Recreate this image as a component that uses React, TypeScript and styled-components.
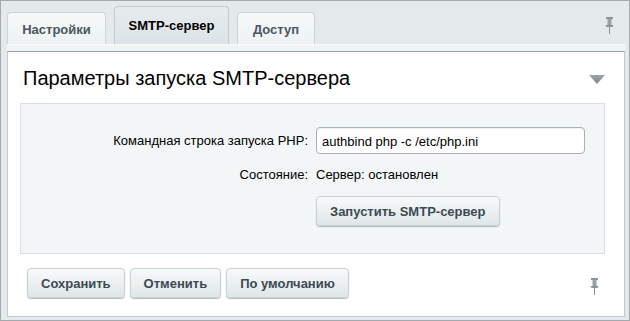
import React from "react";
import styled, { createGlobalStyle } from "styled-components";

const Global = createGlobalStyle`
  html, body { margin: 0; padding: 0; background: #fff; }
  body { font-family: "Liberation Sans", Arial, sans-serif; }
  * { box-sizing: border-box; }
`;

const Frame = styled.div`
  width: 630px;
  height: 321px;
  border: 1px solid #a3a9ac;
  background: #e4eaec;
  padding: 0 4px 3px 5px;
  display: flex;
  flex-direction: column;
`;

const TabBar = styled.div`
  height: 43px;
  display: flex;
  align-items: flex-end;
  gap: 8px;
  padding-left: 1px;
`;

const Tab = styled.div<{ $active?: boolean; $w: number }>`
  width: ${(p) => p.$w}px;
  height: ${(p) => (p.$active ? 38 : 32)}px;
  display: flex;
  align-items: center;
  justify-content: center;
  padding-top: ${(p) => (p.$active ? 0 : 1)}px;
  border: 1px solid ${(p) => (p.$active ? "#c3cbce" : "#cdd4d7")};
  border-bottom: none;
  border-radius: 4px 4px 0 0;
  background: ${(p) =>
    p.$active
      ? "linear-gradient(#e6ecee, #dce3e6)"
      : "linear-gradient(#f7f9f9, #eef2f3)"};
  font-weight: bold;
  font-size: 13px;
  color: ${(p) => (p.$active ? "#000" : "#4a5661")};
`;

const PinSlot = styled.div`
  margin-left: auto;
  align-self: flex-start;
  margin-top: 16px;
  margin-right: 11px;
  display: flex;
`;

const Strip = styled.div`
  height: 7px;
  background: #f1f4f5;
  border-top: 1px solid #f8fafa;
  margin-left: 1px;
`;

const Panel = styled.div`
  flex: 1;
  background: #fff;
  border: 1px solid #c4cbce;
  border-top: 1px solid #9aa2a5;
  margin-left: 1px;
  display: flex;
  flex-direction: column;
  padding: 14px 19px 0 15px;
`;

const TitleRow = styled.div`
  display: flex;
  align-items: center;
  justify-content: space-between;
  height: 24px;
`;

const Title = styled.h1`
  margin: 0;
  font-weight: normal;
  font-size: 20px;
  line-height: 24px;
  color: #000;
`;

const Box = styled.div`
  margin: 13px 0 0 -3px;
  background: #f3f6f7;
  border: 1px solid #d6e0e4;
  padding: 23px 0 27px 0;
  display: grid;
  grid-template-columns: 287px 1fr;
  column-gap: 8px;
  row-gap: 13px;
  align-items: center;
`;

const Label = styled.div`
  text-align: right;
  font-size: 13px;
  line-height: 16px;
  color: #000;
`;

const Value = styled.div`
  font-size: 13px;
  line-height: 16px;
  color: #000;
`;

const Input = styled.input`
  width: 269px;
  height: 27px;
  border: 1px solid #a8b1b5;
  border-radius: 4px;
  padding: 2px 5px 0;
  font-family: "Liberation Sans", Arial, sans-serif;
  font-size: 13px;
  color: #000;
  background: #fff;
  box-shadow: inset 0 1px 1px rgba(0, 0, 0, 0.06);
  outline: none;
`;

const Button = styled.button`
  height: 30px;
  padding: 0 13px;
  border: 1px solid #c8d0d3;
  border-radius: 4px;
  background: linear-gradient(#f8fafa, #dfe6e8);
  box-shadow: 0 1px 1px rgba(0, 0, 0, 0.28);
  font-family: "Liberation Sans", Arial, sans-serif;
  font-weight: bold;
  font-size: 13px;
  color: #3d4a54;
  cursor: pointer;
  justify-self: start;
`;

const Footer = styled.div`
  margin-top: 14px;
  padding-left: 4px;
  display: flex;
  align-items: center;
  gap: 5px;
`;

const FooterPin = styled.div`
  margin-left: auto;
  margin-right: 6px;
  margin-top: 6px;
  display: flex;
`;

const ArrowSlot = styled.div`
  display: flex;
  margin-top: 2px;
`;

const Pin = () => (
  <svg width="9" height="17" viewBox="0 0 9 17">
    <rect x="1" y="0" width="7" height="2" fill="#8c9498" />
    <rect x="2.5" y="2" width="4" height="6" fill="#9aa2a6" />
    <polygon points="0.5,8 8.5,8 7.5,10 1.5,10" fill="#8c9498" />
    <rect x="4" y="10" width="1" height="7" fill="#8c9498" />
  </svg>
);

const Arrow = () => (
  <svg width="16" height="9" viewBox="0 0 16 9">
    <defs>
      <linearGradient id="ag" x1="0" y1="0" x2="0" y2="1">
        <stop offset="0" stopColor="#9da4a7" />
        <stop offset="1" stopColor="#7f878b" />
      </linearGradient>
    </defs>
    <polygon points="0,0 16,0 8,9" fill="url(#ag)" />
  </svg>
);

export default function App() {
  return (
    <>
      <Global />
      <Frame>
        <TabBar>
          <Tab $w={99}>Настройки</Tab>
          <Tab $w={115} $active>
            SMTP-сервер
          </Tab>
          <Tab $w={78}>Доступ</Tab>
          <PinSlot>
            <Pin />
          </PinSlot>
        </TabBar>
        <Strip />
        <Panel>
          <TitleRow>
            <Title>Параметры запуска SMTP-сервера</Title>
            <ArrowSlot>
              <Arrow />
            </ArrowSlot>
          </TitleRow>
          <Box>
            <Label>Командная строка запуска PHP:</Label>
            <Input defaultValue="authbind php -c /etc/php.ini" />
            <Label>Состояние:</Label>
            <Value>Сервер: остановлен</Value>
            <span />
            <Button>Запустить SMTP-сервер</Button>
          </Box>
          <Footer>
            <Button>Сохранить</Button>
            <Button>Отменить</Button>
            <Button>По умолчанию</Button>
            <FooterPin>
              <Pin />
            </FooterPin>
          </Footer>
        </Panel>
      </Frame>
    </>
  );
}
